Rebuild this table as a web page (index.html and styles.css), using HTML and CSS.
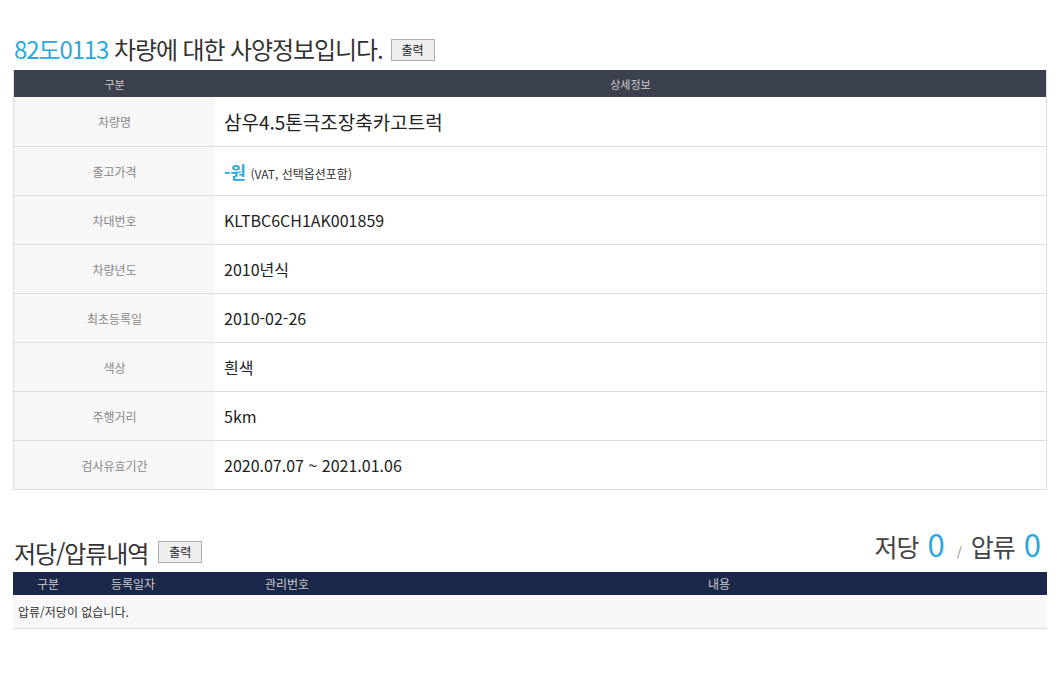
FILE: index.html
```html
<!DOCTYPE html>
<html lang="ko">
<head>
<meta charset="UTF-8" />
<title>사양정보</title>
<link rel="stylesheet" href="styles.css">
</head>
<body>
<div class="wrap">

  <div class="sec-title">
    <h2><span class="num">82도0113</span> 차량에 대한 사양정보입니다.</h2>
    <button class="print">출력</button>
  </div>

  <table class="spec">
    <thead>
      <tr><th class="lbl">구분</th><th>상세정보</th></tr>
    </thead>
    <tbody>
      <tr class="first"><td class="lbl">차량명</td><td class="big">삼우4.5톤극조장축카고트럭</td></tr>
      <tr><td class="lbl">출고가격</td><td><span class="price">-원</span> <span class="note">(VAT, 선택옵션포함)</span></td></tr>
      <tr><td class="lbl">차대번호</td><td>KLTBC6CH1AK001859</td></tr>
      <tr><td class="lbl">차량년도</td><td>2010년식</td></tr>
      <tr><td class="lbl">최초등록일</td><td>2010-02-26</td></tr>
      <tr><td class="lbl">색상</td><td>흰색</td></tr>
      <tr><td class="lbl">주행거리</td><td>5km</td></tr>
      <tr><td class="lbl">검사유효기간</td><td>2020.07.07 ~ 2021.01.06</td></tr>
    </tbody>
  </table>

  <div class="sec-title second">
    <h2>저당/압류내역</h2>
    <button class="print">출력</button>
    <div class="count">
      저당 <span class="zero">0</span> <span class="slash">/</span> 압류 <span class="zero">0</span>
    </div>
  </div>

  <table class="lien">
    <thead>
      <tr>
        <th class="c1">구분</th>
        <th class="c2">등록일자</th>
        <th class="c3">관리번호</th>
        <th>내용</th>
      </tr>
    </thead>
    <tbody>
      <tr><td colspan="4">압류/저당이 없습니다.</td></tr>
    </tbody>
  </table>

</div>
</body>
</html>
```

FILE: styles.css
```css
body {
  margin: 0;
  background: #fff;
  color: #333;
  font-family: "Noto Sans CJK KR", "Noto Sans", sans-serif;
}
.wrap {
  width: 1034px;
  padding: 30px 0 0 13px;
}
.sec-title {
  display: flex;
  align-items: flex-end;
  height: 34px;
  margin-bottom: 6px;
}
.sec-title h2 {
  margin: 0;
  font-size: 24px;
  font-weight: 400;
  letter-spacing: -1.1px;
  line-height: 30px;
  color: #333;
  padding-left: 1px;
}
.sec-title .num {
  color: #2ba9dc;
}
button.print {
  margin: 0 0 3px 8px;
  width: 44px;
  height: 22px;
  padding: 0;
  border: 1px solid #adadad;
  background: #eee;
  font-family: inherit;
  font-size: 12px;
  color: #222;
  line-height: 18px;
}
table {
  width: 100%;
  border-collapse: collapse;
}
.spec {
  border-left: 1px solid #ddd;
  border-right: 1px solid #ddd;
}
.spec th {
  background: #3b414e;
  color: #ccc;
  font-size: 11px;
  font-weight: 400;
  height: 27px;
  padding: 0;
}
.spec th.lbl {
  width: 201px;
}
.spec td {
  height: 48px;
  padding: 0 0 0 9px;
  border-bottom: 1px solid #ddd;
  font-size: 16px;
  color: #222;
}
.spec .first td {
  height: 49px;
}
.spec td.lbl {
  background: #f7f7f7;
  color: #888;
  font-size: 12px;
  text-align: center;
  padding: 0;
}
.spec td.big {
  font-size: 19px;
}
.price {
  color: #2ba9dc;
  font-weight: 700;
  font-size: 17px;
}
.note {
  font-size: 12px;
  color: #333;
}
.sec-title.second {
  margin-top: 35px;
  height: 43px;
  margin-bottom: 4px;
}
.second button.print {
  margin: 0 0 5px 10px;
}
.count {
  margin-left: auto;
  font-size: 25px;
  color: #444;
  letter-spacing: -1px;
  line-height: 32px;
  padding-right: 4px;
}
.count .zero {
  color: #2ba9dc;
  font-size: 31px;
  margin: 0 3px;
}
.count .slash {
  font-size: 13px;
  color: #888;
  margin: 0 4px;
}
.lien th {
  background: #1b2849;
  color: #ccc;
  font-size: 12px;
  font-weight: 400;
  height: 23px;
  padding: 0;
}
.lien th.c1 { width: 70px; }
.lien th.c2 { width: 100px; }
.lien th.c3 { width: 208px; }
.lien td {
  background: #f8f8f8;
  height: 33px;
  padding: 0 0 0 5px;
  font-size: 12px;
  color: #333;
  border-bottom: 1px solid #ddd;
}
```
